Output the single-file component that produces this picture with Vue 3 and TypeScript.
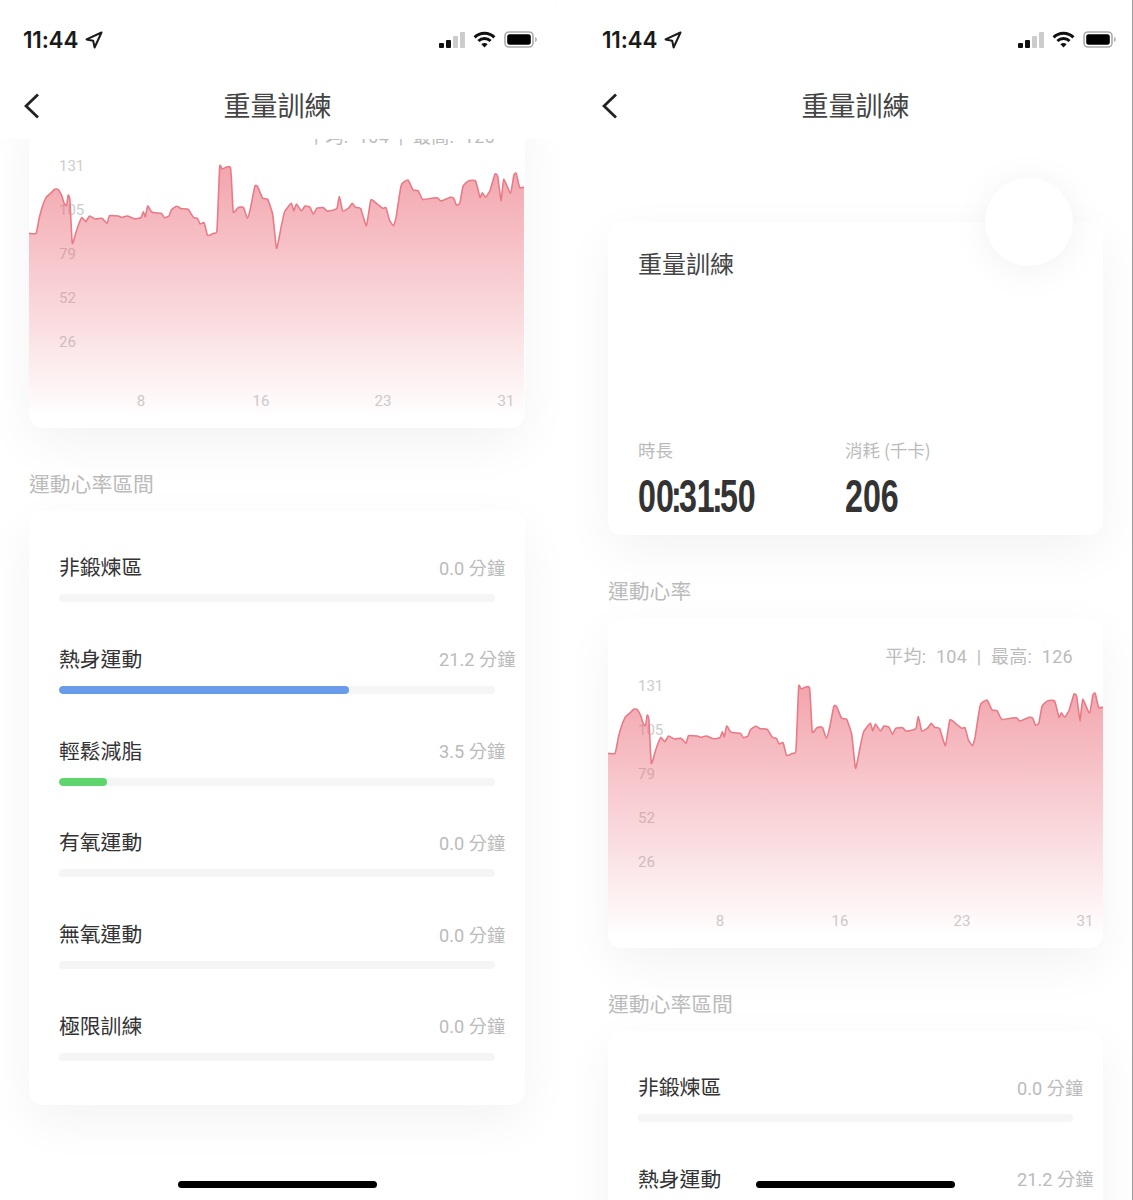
<script setup lang="ts">
// heart rate trace, traced off the screenshot (raw units, mapped to the 495px card below)
const RAW: [number, number][] = [
  [54,370],[75,370],[85,320],[95,285],[105,262],[120,248],[130,238],[140,238],[150,255],[158,280],[165,287],[170,255],[175,270],[182,400],[195,360],[210,323],[222,335],[233,318],[250,327],[270,325],[285,340],[292,317],[318,318],[328,322],[345,318],[365,326],[385,323],[392,305],[398,320],[405,288],[418,307],[445,310],[455,323],[468,318],[475,300],[490,289],[505,296],[525,298],[540,322],[552,325],[560,342],[572,338],[582,376],[600,370],[610,360],[618,170],[625,177],[650,173],[658,305],[672,293],[688,292],[700,325],[710,290],[722,228],[730,230],[745,265],[760,268],[775,315],[786,415],[800,350],[810,305],[830,280],[837,303],[845,282],[860,303],[870,288],[885,292],[895,313],[905,295],[925,293],[935,303],[955,300],[965,295],[972,260],[982,303],[1000,293],[1010,280],[1020,292],[1035,296],[1052,347],[1065,270],[1085,283],[1100,295],[1110,293],[1120,330],[1132,347],[1140,320],[1155,225],[1175,210],[1190,240],[1205,242],[1218,268],[1245,265],[1262,263],[1272,273],[1300,262],[1310,265],[1318,285],[1328,280],[1338,228],[1355,212],[1375,213],[1388,262],[1395,248],[1405,262],[1418,240],[1432,193],[1440,198],[1450,272],[1458,208],[1478,250],[1488,195],[1495,190],[1505,232],[1518,232],
]

const pts = RAW.map(([x, y]) => [((x - 54) * 495) / 1464, y / 3 - 40])

// smooth the trace a little, the app draws a curve and not straight segments
function smooth(p: number[][]): string {
  const k = 0.07
  let d = ''
  for (let i = 0; i < p.length - 1; i++) {
    const a = p[Math.max(i - 1, 0)]
    const b = p[i]
    const c = p[i + 1]
    const e = p[Math.min(i + 2, p.length - 1)]
    const c1 = [b[0] + (c[0] - a[0]) * k, b[1] + (c[1] - a[1]) * k]
    const c2 = [c[0] - (e[0] - b[0]) * k, c[1] - (e[1] - b[1]) * k]
    d += ` C${c1[0].toFixed(1)} ${c1[1].toFixed(1)} ${c2[0].toFixed(1)} ${c2[1].toFixed(1)} ${c[0].toFixed(1)} ${c[1].toFixed(1)}`
  }
  return d
}

const curve = smooth(pts)
const line = `M${pts[0][0]} ${pts[0][1]}${curve}`
const area = `M0 278 L${pts[0][0]} ${pts[0][1]}${curve} L495 278Z`

const yLabels = [
  { text: '131', top: 16 },
  { text: '105', top: 60 },
  { text: '79', top: 104 },
  { text: '52', top: 148 },
  { text: '26', top: 192 },
]
const xLabels = [
  { text: '8', left: 112 },
  { text: '16', left: 232 },
  { text: '23', left: 354 },
  { text: '31', left: 477 },
]

interface Zone {
  name: string
  minutes: string
  percent: number
  color?: string
}

const zones: Zone[] = [
  { name: '非鍛煉區', minutes: '0.0', percent: 0 },
  { name: '熱身運動', minutes: '21.2', percent: 66.6, color: '#6a9bea' },
  { name: '輕鬆減脂', minutes: '3.5', percent: 11, color: '#5fd56e' },
  { name: '有氧運動', minutes: '0.0', percent: 0 },
  { name: '無氧運動', minutes: '0.0', percent: 0 },
  { name: '極限訓練', minutes: '0.0', percent: 0 },
]

const phones = [{ scrolled: true }, { scrolled: false }]
</script>

<template>
  <div class="screens">
    <div v-for="(phone, i) in phones" :key="i" class="phone" :class="{ scrolled: phone.scrolled }">
      <header class="top">
        <div class="status">
          <div class="clock">
            <span>11:44</span>
            <svg width="18" height="18" viewBox="0 0 18 18" fill="none">
              <path d="M16.500 1.500 1.500 8.400 8.200 9.800 9.600 16.500Z" stroke="#1a1a1a" stroke-width="2" stroke-linejoin="round" />
            </svg>
          </div>
          <div class="indicators">
            <svg width="26" height="16" viewBox="0 0 26 16">
              <rect x="0" y="11" width="5" height="5" rx="1" fill="#111" />
              <rect x="7" y="8" width="5" height="8" rx="1" fill="#111" />
              <rect x="14" y="4" width="5" height="12" rx="1" fill="#ccc" />
              <rect x="21" y="0" width="5" height="16" rx="1" fill="#ccc" />
            </svg>
            <svg width="23" height="17" viewBox="0 0 23 17" fill="none">
              <path d="M1.600 6.400a14 14 0 0 1 19.800 0" stroke="#111" stroke-width="3" />
              <path d="M5.400 10a8.800 8.800 0 0 1 12.200 0" stroke="#111" stroke-width="3" />
              <path d="M8.400 13.200a4.400 4.400 0 0 1 6.200 0l-3.100 3.400z" fill="#111" />
            </svg>
            <svg width="34" height="17" viewBox="0 0 34 17" fill="none">
              <rect x="1" y="1" width="28" height="15" rx="4" stroke="#aaa" stroke-width="1.600" />
              <rect x="3.200" y="3.200" width="23.600" height="10.600" rx="2.400" fill="#000" />
              <path d="M31.200 6v5c1-.3 1.600-1.300 1.600-2.500S32.200 6.300 31.200 6z" fill="#aaa" />
            </svg>
          </div>
        </div>
        <div class="nav">
          <svg class="back" width="16" height="26" viewBox="0 0 16 26" fill="none">
            <path d="M14 1.500 2 13l12 11.500" stroke="#222" stroke-width="2.800" />
          </svg>
          <span class="nav-title">重量訓練</span>
        </div>
      </header>

      <main class="content">
        <section class="card summary">
          <div class="badge"></div>
          <h2 class="summary-title">重量訓練</h2>
          <div class="metrics">
            <div class="metric">
              <div class="metric-label">時長</div>
              <div class="metric-value">00<span class="colon">:</span>31<span class="colon">:</span>50</div>
            </div>
            <div class="metric">
              <div class="metric-label">消耗 (千卡)</div>
              <div class="metric-value">206</div>
            </div>
          </div>
        </section>

        <h3 class="section-title">運動心率</h3>
        <section class="card heart">
          <div class="heart-stats">平均:&nbsp; 104&nbsp; |&nbsp; 最高:&nbsp; 126</div>
          <div class="chart">
            <span v-for="l in yLabels" :key="l.text" class="tick" :style="{ left: '30px', top: l.top + 'px' }">{{ l.text }}</span>
            <span v-for="l in xLabels" :key="l.text" class="tick tick-x" :style="{ left: l.left + 'px', top: '251px' }">{{ l.text }}</span>
            <svg class="plot" width="495" height="278" viewBox="0 0 495 278">
              <defs>
                <linearGradient :id="'fade' + i" gradientUnits="userSpaceOnUse" x1="0" y1="10" x2="0" y2="268">
                  <stop offset="0" stop-color="#ea6a78" stop-opacity="0.62" />
                  <stop offset="1" stop-color="#ea6a78" stop-opacity="0" />
                </linearGradient>
              </defs>
              <path :d="area" :fill="`url(#fade${i})`" />
              <path :d="line" fill="none" stroke="#e97a86" stroke-width="1.6" stroke-linejoin="round" />
            </svg>
          </div>
        </section>

        <h3 class="section-title">運動心率區間</h3>
        <section class="card zones">
          <div v-for="z in zones" :key="z.name" class="zone">
            <div class="zone-head">
              <span class="zone-name">{{ z.name }}</span>
              <span class="zone-value">{{ z.minutes }} 分鐘</span>
            </div>
            <div class="track">
              <div v-if="z.percent" class="fill" :style="{ width: z.percent + '%', background: z.color }"></div>
            </div>
          </div>
        </section>
      </main>

      <div class="home-bar"></div>
    </div>
  </div>
</template>

<style scoped>
.screens {
  display: flex;
  gap: 23px;
  width: 1133px;
  height: 1200px;
  box-sizing: border-box;
  overflow: hidden;
  position: relative;
  background: #fff;
  font-family: "Noto Sans CJK TC", "Noto Sans", sans-serif;
}

.screens::after {
  content: "";
  position: absolute;
  z-index: 4;
  top: 0;
  right: 0;
  bottom: 0;
  width: 1px;
  background: #9a9a9a;
}

.phone {
  position: relative;
  width: 555px;
  flex: none;
  height: 1200px;
}

.top {
  position: relative;
  z-index: 2;
  height: 139px;
  background: #fff;
}

.status {
  display: flex;
  justify-content: space-between;
  align-items: center;
  height: 79px;
  padding: 0 17px 1px 23px;
}

.phone:not(.scrolled) .status {
  padding: 0 16px 1px 24px;
}

.clock {
  display: flex;
  align-items: center;
  gap: 7px;
  font-family: Inter, "Liberation Sans", sans-serif;
  font-size: 22.5px;
  font-weight: 600;
  letter-spacing: -0.2px;
  color: #1a1a1a;
}

.indicators {
  display: flex;
  align-items: center;
  gap: 8px;
}

.nav {
  position: relative;
  display: flex;
  justify-content: center;
  align-items: center;
  height: 52px;
}

.back {
  position: absolute;
  left: 24px;
  top: 13px;
}

.nav-title {
  margin-top: -2px;
  font-size: 27px;
  line-height: 52px;
  color: #444;
}

.content {
  padding: 83px 30px 0;
}

.scrolled .content {
  margin-top: -520px;
  padding-left: 29px;
}

.card {
  position: relative;
  background: #fff;
  border-radius: 14px;
  box-shadow: 0 16px 50px rgba(0, 0, 0, 0.05);
}

.summary {
  display: flex;
  flex-direction: column;
  justify-content: space-between;
  height: 313px;
  box-sizing: border-box;
  padding: 23px 30px 14px;
}

.badge {
  position: absolute;
  top: -44px;
  right: 30px;
  width: 88px;
  height: 88px;
  border-radius: 50%;
  background: #fff;
  box-shadow: 0 4px 40px rgba(0, 0, 0, 0.06);
}

.summary-title {
  margin: 0;
  font-size: 24px;
  font-weight: 400;
  line-height: 36px;
  color: #444;
}

.metrics {
  display: flex;
}

.metric {
  width: 207px;
}

.metric-label {
  font-size: 17.5px;
  line-height: 26px;
  color: #bbb;
}

.metric-value {
  margin-top: 8px;
  font-family: "Liberation Sans", Arial, sans-serif;
  font-size: 46px;
  font-weight: 700;
  line-height: 50px;
  color: #333;
  transform: scaleX(0.7);
  transform-origin: left center;
  white-space: nowrap;
}

.colon {
  margin: 0 -4px;
}

.section-title {
  margin: 40px 0 13px;
  font-size: 20.8px;
  font-weight: 400;
  line-height: 30px;
  color: #bbb;
}

.heart {
  height: 330px;
  overflow: hidden;
}

.heart-stats {
  height: 26px;
  padding: 26px 30px 0 0;
  font-family: Roboto, "Noto Sans CJK TC", sans-serif;
  font-size: 18px;
  line-height: 26px;
  letter-spacing: 0.3px;
  text-align: right;
  color: #bbb;
}

.chart {
  position: relative;
  height: 278px;
}

.plot {
  position: absolute;
  left: 0;
  top: 0;
  display: block;
}

.tick {
  position: absolute;
  transform: translateY(-50%);
  font-family: Roboto, sans-serif;
  font-size: 15px;
  line-height: 20px;
  color: #ccc;
}

.tick-x {
  transform: translate(-50%, -50%);
}

.zones {
  padding: 40px 30px 44px;
}

.zone + .zone {
  margin-top: 40.8px;
}

.zone-head {
  display: flex;
  justify-content: space-between;
  align-items: center;
  height: 30px;
  margin-bottom: 13px;
}

.zone-name {
  font-size: 20.8px;
  line-height: 30px;
  color: #333;
}

.zone-value {
  width: 56px;
  flex: none;
  margin-top: 5px;
  font-family: Roboto, "Noto Sans CJK TC", sans-serif;
  font-size: 18.2px;
  line-height: 30px;
  white-space: nowrap;
  color: #bbb;
}

.track {
  height: 8px;
  border-radius: 4px;
  background: #f5f5f5;
  overflow: hidden;
}

.fill {
  height: 100%;
  border-radius: 4px;
}

.home-bar {
  position: absolute;
  z-index: 3;
  left: 178px;
  bottom: 12px;
  width: 199px;
  height: 7px;
  border-radius: 4px;
  background: #000;
}
</style>

<style>
html,
body {
  background: #fff;
}
</style>
